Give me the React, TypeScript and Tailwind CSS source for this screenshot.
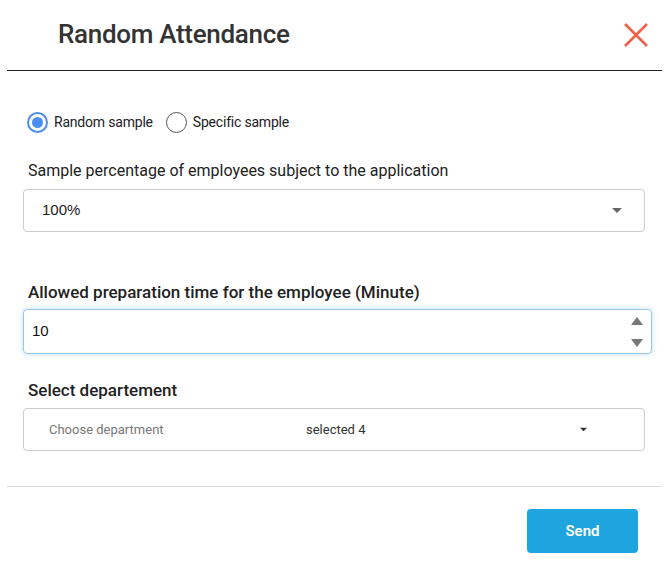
import React, { useState } from 'react';

const font = { fontFamily: 'Roboto, "Noto Sans", sans-serif' };

const Caret: React.FC<{ className?: string }> = ({ className }) => (
  <svg width="10" height="5" viewBox="0 0 10 5" className={className}>
    <path d="M0 0 L10 0 L5 5 Z" fill="currentColor" />
  </svg>
);

const Radio: React.FC<{ checked: boolean; label: string; onClick: () => void }> = ({ checked, label, onClick }) => (
  <button onClick={onClick} className="flex items-center gap-[6px] text-[14px] text-[#222] tracking-[-0.2px]">
    <span
      className={`w-[21px] h-[21px] rounded-full flex items-center justify-center ${
        checked ? 'border-[2px] border-[#4a8ff0]' : 'border-[1.5px] border-[#555]'
      }`}
    >
      {checked && <span className="w-[11px] h-[11px] rounded-full bg-[#4a8ff0]" />}
    </span>
    <span>{label}</span>
  </button>
);

export default function App() {
  const [sample, setSample] = useState<'random' | 'specific'>('random');

  return (
    <div className="w-[669px] h-[581px] bg-white overflow-hidden" style={font}>
      {/* Header */}
      <div className="mx-[7px] h-[71px] border-b border-[#222] flex items-center justify-between pl-[51px] pr-[14px]">
        <h2 className="text-[26px] text-[#333] font-medium tracking-[-0.3px] mb-[2px]">Random Attendance</h2>
        <button className="text-[#f2604a] mb-[1px]">
          <svg width="24" height="24" viewBox="0 0 24 24">
            <path d="M1 1 L23 23 M23 1 L1 23" stroke="currentColor" strokeWidth="2.6" fill="none" />
          </svg>
        </button>
      </div>

      {/* Body */}
      <div className="px-[23px]">
        <div className="mt-[39px] h-[24px] flex items-center gap-[13px] pl-[4px]">
          <Radio checked={sample === 'random'} label="Random sample" onClick={() => setSample('random')} />
          <Radio checked={sample === 'specific'} label="Specific sample" onClick={() => setSample('specific')} />
        </div>

        <div className="mt-[25px] h-[24px] leading-[24px] pl-[5px] text-[16px] text-[#222]">
          Sample percentage of employees subject to the application
        </div>
        <div className="mt-[6px] w-[622px] h-[43px] border border-[#ccc] rounded-[4px] flex items-center justify-between pl-[18px] pr-[22px]">
          <span className="text-[15px] text-[#222]" style={{ fontFamily: '"Liberation Sans", Arial, sans-serif' }}>100%</span>
          <Caret className="text-[#666]" />
        </div>

        <div className="mt-[48px] h-[24px] leading-[24px] pl-[5px] text-[17px] font-medium text-[#222]">
          Allowed preparation time for the employee (Minute)
        </div>
        <div className="mt-[5px] w-[629px] h-[45px] border border-[#9cc7ea] rounded-[4px] shadow-[0_0_5px_rgba(102,175,233,0.45)] flex items-center justify-between pl-[8px] pr-[8px]">
          <span className="text-[15px] text-[#111]" style={{ fontFamily: '"Liberation Sans", Arial, sans-serif' }}>10</span>
          <div className="flex flex-col items-center gap-[14px] text-[#777]">
            <svg width="12" height="8" viewBox="0 0 12 8">
              <path d="M0 8 L6 0 L12 8 Z" fill="currentColor" />
            </svg>
            <svg width="12" height="8" viewBox="0 0 12 8">
              <path d="M0 0 L12 0 L6 8 Z" fill="currentColor" />
            </svg>
          </div>
        </div>

        <div className="mt-[24px] h-[24px] leading-[24px] pl-[5px] text-[17px] font-medium text-[#222]">
          Select departement
        </div>
        <div className="mt-[6px] w-[622px] h-[43px] border border-[#ccc] rounded-[4px] flex items-center pl-[25px] pr-[57px] text-[13px]">
          <span className="text-[#777] w-[257px]">Choose department</span>
          <span className="text-[#333] flex-1">selected 4</span>
          <Caret className="text-[#333] w-[7px]" />
        </div>
      </div>

      {/* Footer */}
      <div className="mx-[7px] mt-[35px] border-t border-[#ddd] flex justify-end pr-[24px]">
        <button className="mt-[22px] w-[111px] h-[44px] rounded-[4px] bg-[#1ea5e0] text-white text-[15px] font-semibold">
          Send
        </button>
      </div>
    </div>
  );
}
